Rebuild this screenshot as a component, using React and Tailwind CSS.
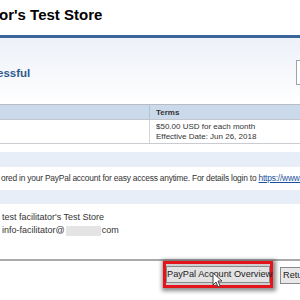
export default function App() {
  return (
    <div className="w-[300px] h-[300px] overflow-hidden bg-white font-['Liberation_Sans',Arial,sans-serif] text-[#222]">
      <div className="h-[35px] pt-[6px] pl-0">
        <h1 className="text-[15px] font-bold leading-[18px] text-black -ml-[1px]">or's Test Store</h1>
      </div>
      <div className="h-[3px] bg-[#3b6499]" />
      <div className="h-[66px] bg-gradient-to-b from-[#edf1f8] to-white flex justify-between items-start">
        <div className="pt-[28px] -ml-[3px] text-[11.5px] font-bold text-[#2f5b8c] leading-[14px]">essful</div>
        <div className="mt-[22px] w-[8px] h-[25px] border border-[#9aa3ae] bg-white -mr-[4px]" />
      </div>

      <div className="border-t border-[#b9bdc3]">
        <div className="flex h-[15px] bg-[#cbdaeb] border-b border-[#c2c7cd]">
          <div className="w-[150px] border-r border-[#b9c3cf]" />
          <div className="pl-[6px] text-[8px] font-bold leading-[15px] text-[#333]">Terms</div>
        </div>
        <div className="flex h-[24px] border-b border-[#c9ccd0]">
          <div className="w-[150px] border-r border-[#d2d5d9]" />
          <div className="pl-[6px] pt-[2px] text-[8px] leading-[10px] text-[#333]">
            <div>$50.00 USD for each month</div>
            <div>Effective Date: Jun 26, 2018</div>
          </div>
        </div>
      </div>

      <div className="h-[8px]" />
      <div className="h-[15px] bg-[#e7eef7]" />
      <div className="h-[23px] flex items-center pl-[1px] text-[8.4px] tracking-[-0.2px] text-[#333] whitespace-nowrap">
        ored in your PayPal account for easy access anytime. For details login to&nbsp;
        <span className="text-[#1a4f9c] underline">https://www.</span>
      </div>
      <div className="h-[14px] bg-[#e7eef7]" />
      <div className="h-[55px] pt-[7px] pl-[2px] text-[9px] leading-[13px] text-[#333]">
        <div>test facilitator's Test Store</div>
        <div className="flex items-center">
          info-facilitator@
          <span className="inline-block w-[35px] h-[10px] bg-[#e4e4e4] mx-[1px]" />
          com
        </div>
      </div>
      <div className="h-[2px] bg-[#a9a9a9]" />

      <div className="relative flex items-start">
        <div className="ml-[163px] w-[115px] h-[27px] border-[3px] border-[#e3141c] shadow-[1px_1px_4px_2px_rgba(0,0,0,0.45)] flex items-center justify-center bg-[#cfcfcf]">
          <div className="h-[17px] w-[104px] border border-[#8a8a8a] bg-[#e3e3e3] text-[9.2px] leading-[15px] text-[#222] whitespace-nowrap text-center">
            PayPal Account Overview
          </div>
        </div>
        <div className="ml-[7px] mt-[6px] h-[17px] pl-[2px] border border-[#8a8a8a] bg-[#e8e8e8] text-[9.2px] leading-[15px] text-[#222]">
          Return
        </div>
        <svg className="absolute left-[212px] top-[11px]" width="10" height="16" viewBox="0 0 10 16">
          <path d="M1 1 L1 13 L4 10 L6 15 L8 14 L6 9 L10 9 Z" fill="white" stroke="#444" strokeWidth="1" />
        </svg>
      </div>
    </div>
  );
}
